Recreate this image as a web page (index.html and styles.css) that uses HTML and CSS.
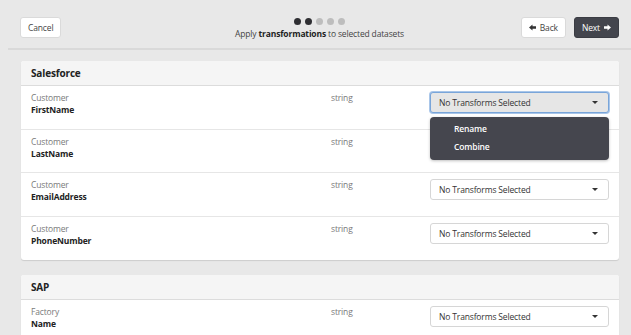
FILE: index.html
```html
<!DOCTYPE html>
<html>
  <head>
    <meta charset="UTF-8">
    <title>Apply transformations</title>
    <link rel="stylesheet" href="styles.css">
  </head>
  <body>
    <div class="topbar">
      <div class="topbar-left"><button class="btn">Cancel</button></div>
      <div class="steps">
        <div class="dots">
          <span class="dot done"></span><span class="dot done"></span><span class="dot"></span><span class="dot"></span><span class="dot"></span>
        </div>
        <p class="step-title">Apply <b>transformations</b> to selected datasets</p>
      </div>
      <div class="topbar-right">
        <button class="btn">
          <svg class="arrow" viewBox="0 0 8 8" width="7" height="7"><path d="M0 4 L4 0.5 L4 2.6 L8 2.6 L8 5.4 L4 5.4 L4 7.5 Z" fill="#333"/></svg>
          Back
        </button>
        <button class="btn btn-dark">
          Next
          <svg class="arrow" viewBox="0 0 8 8" width="7" height="7"><path d="M8 4 L4 0.5 L4 2.6 L0 2.6 L0 5.4 L4 5.4 L4 7.5 Z" fill="#fff"/></svg>
        </button>
      </div>
    </div>

    <div class="content">
      <div class="card">
        <div class="card-head">Salesforce</div>
        <div class="row">
          <div class="field"><span class="entity">Customer</span><span class="name">FirstName</span></div>
          <div class="type">string</div>
          <div class="cell">
            <div class="select focus"><span>No Transforms Selected</span><span class="caret"></span></div>
            <ul class="menu">
              <li>Rename</li>
              <li>Combine</li>
            </ul>
          </div>
        </div>
        <div class="row">
          <div class="field"><span class="entity">Customer</span><span class="name">LastName</span></div>
          <div class="type">string</div>
          <div class="cell"></div>
        </div>
        <div class="row">
          <div class="field"><span class="entity">Customer</span><span class="name">EmailAddress</span></div>
          <div class="type">string</div>
          <div class="cell">
            <div class="select"><span>No Transforms Selected</span><span class="caret"></span></div>
          </div>
        </div>
        <div class="row">
          <div class="field"><span class="entity">Customer</span><span class="name">PhoneNumber</span></div>
          <div class="type">string</div>
          <div class="cell">
            <div class="select"><span>No Transforms Selected</span><span class="caret"></span></div>
          </div>
        </div>
      </div>

      <div class="card">
        <div class="card-head">SAP</div>
        <div class="row">
          <div class="field"><span class="entity">Factory</span><span class="name">Name</span></div>
          <div class="type">string</div>
          <div class="cell">
            <div class="select"><span>No Transforms Selected</span><span class="caret"></span></div>
          </div>
        </div>
      </div>
    </div>
  </body>
</html>
```

FILE: styles.css
```css
*, ::after, ::before {
  box-sizing: border-box;
}

html, body {
  margin: 0;
  height: 100%;
  overflow: hidden;
}

body {
  background: #e8e8e8;
  font-family: "Open Sans", "DejaVu Sans", sans-serif;
  font-size: 8.5px;
  letter-spacing: -0.15px;
  color: #333;
}

/* top bar */
.topbar {
  display: grid;
  grid-template-columns: 1fr auto 1fr;
  align-items: start;
  margin-left: 8px;
  padding: 17px 12px 0 12px;
  height: 50px;
  border-bottom: 2px solid #d9d9d9;
}

.topbar-right {
  display: flex;
  justify-content: flex-end;
  gap: 8px;
}

.btn {
  display: inline-flex;
  align-items: center;
  gap: 4px;
  height: 21px;
  padding: 0 7px;
  font-family: inherit;
  font-size: 8.5px;
  letter-spacing: -0.15px;
  color: #444;
  background: #fff;
  border: 1px solid #dadada;
  border-radius: 3px;
}

.btn-dark {
  background: #43454d;
  border-color: #3a3c43;
  color: #fff;
}

.steps {
  text-align: center;
}

.dots {
  display: flex;
  justify-content: center;
  gap: 4px;
  margin-top: 1px;
}

.dot {
  width: 7px;
  height: 7px;
  border-radius: 50%;
  background: #bdbdbd;
}

.dot.done {
  background: #2f2f33;
}

.step-title {
  margin: 3px 0 0;
  line-height: 12px;
  color: #444;
}

.step-title b {
  color: #222;
}

/* cards */
.content {
  padding: 11px 12px 0 21px;
}

.card {
  background: #fff;
  border-radius: 3px;
  box-shadow: 0 1px 1px rgba(0,0,0,.12);
  margin-bottom: 15px;
}

.card-head {
  height: 25px;
  line-height: 24px;
  padding: 0 10px;
  background: #f5f5f5;
  border-bottom: 1px solid #dcdcdc;
  border-radius: 3px 3px 0 0;
  font-size: 10px;
  font-weight: 700;
  color: #222;
}

.row {
  display: flex;
  height: 43.5px;
  padding: 0 10px;
  border-bottom: 1px solid #e6e6e6;
}

.row:last-child {
  border-bottom: 0;
}

.field {
  width: 300px;
  padding-top: 6px;
  line-height: 12px;
}

.entity {
  display: block;
  color: #7a7a7a;
}

.name {
  display: block;
  font-weight: 700;
  color: #222;
}

.type {
  width: 99px;
  padding-top: 6px;
  line-height: 12px;
  color: #7a7a7a;
}

.cell {
  position: relative;
  flex: 1;
  padding-top: 6px;
}

.select {
  display: flex;
  align-items: center;
  justify-content: space-between;
  height: 21px;
  padding: 0 8px;
  background: #fff;
  border: 1px solid #d6d6d6;
  border-radius: 3px;
  color: #333;
}

.select.focus {
  background: #e6e6e6;
  border-color: #79a5d9;
  box-shadow: 0 0 0 1px #a9c6e9;
}

.caret {
  width: 0;
  height: 0;
  border-left: 3px solid transparent;
  border-right: 3px solid transparent;
  border-top: 3px solid #333;
  margin-right: 2px;
}

.menu {
  position: absolute;
  top: 31px;
  left: 0;
  right: 0;
  z-index: 2;
  margin: 0;
  padding: 3px 0 4px;
  list-style: none;
  background: #45464e;
  border-radius: 4px;
  box-shadow: 0 1px 3px rgba(0,0,0,.25);
}

.menu li {
  height: 18px;
  line-height: 18px;
  padding-left: 24px;
  color: #fff;
  font-weight: 600;
}
```
